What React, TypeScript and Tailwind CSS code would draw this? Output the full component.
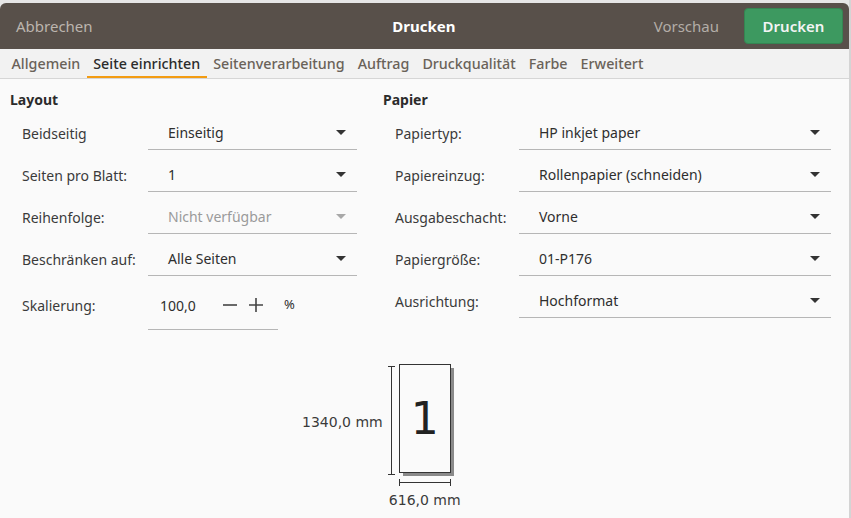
const tabs = [
  "Allgemein",
  "Seite einrichten",
  "Seitenverarbeitung",
  "Auftrag",
  "Druckqualität",
  "Farbe",
  "Erweitert",
];

function Arrow({ disabled }: { disabled?: boolean }) {
  return (
    <svg width="12" height="7" viewBox="0 0 12 7" className="shrink-0">
      <path d="M1 1 L11 1 L6 6 Z" fill={disabled ? "#a8a8a8" : "#333333"} />
    </svg>
  );
}

function Combo({
  label,
  value,
  labelW,
  boxW,
  disabled,
}: {
  label: string;
  value: string;
  labelW: string;
  boxW: string;
  disabled?: boolean;
}) {
  return (
    <div className="flex h-[34px]">
      <div className={`${labelW} flex items-center pt-[1px] text-[#3a3a3a]`}>{label}</div>
      <div
        className={`${boxW} flex items-center justify-between border-b border-[#b6b6b6] pl-5 pr-[10px]`}
      >
        <span className={disabled ? "text-[#9a9a9a]" : "text-[#2e2e2e]"}>{value}</span>
        <Arrow disabled={disabled} />
      </div>
    </div>
  );
}

export default function App() {
  return (
    <div
      className="w-[851px] h-[518px] overflow-hidden bg-[#e6e6e6] text-[14px] flex"
      style={{ fontFamily: '"Noto Sans", "Open Sans", sans-serif' }}
    >
      <div className="w-[849px] h-full flex flex-col pt-[3px]">
        {/* header */}
        <div className="h-[46px] bg-[#58504a] rounded-t-[6px] flex items-center pl-4 pr-[6px]">
          <span className="text-[15px] text-[#bcb5ae] w-[120px]">Abbrechen</span>
          <span className="flex-1 text-center text-[15px] font-bold text-white pl-[58px]">
            Drucken
          </span>
          <span className="text-[15px] text-[#b3ada7] mr-[25px]">Vorschau</span>
          <button className="h-[36px] w-[99px] rounded-[4px] bg-[#3d9960] border border-[#358552] text-[15px] font-semibold text-[#f4f4f4]">
            Drucken
          </button>
        </div>

        {/* tabs */}
        <div className="h-[30px] bg-[#f2f2f2] border-b border-[#d6d6d6] flex px-[5px] text-[14.3px]">
          {tabs.map((t) => (
            <div
              key={t}
              className={
                t === "Seite einrichten"
                  ? "px-[6.5px] flex items-center border-b-2 border-[#f39c12] text-[#2b2b2b] font-medium pt-[2px]"
                  : "px-[6.5px] flex items-center border-b-2 border-transparent text-[#6a6259] font-medium pt-[2px]"
              }
            >
              {t}
            </div>
          ))}
        </div>

        {/* content */}
        <div className="flex-1 bg-[#fafafa] flex flex-col">
          <div className="flex pl-[10px] pt-[10px]">
            <div className="w-[373px] flex flex-col">
              <div className="h-[22px] font-bold text-[#2b2b2b] leading-[22px]">Layout</div>
              <div className="flex flex-col gap-[8px] pl-3 mt-[5px]">
                <Combo label="Beidseitig" value="Einseitig" labelW="w-[126px]" boxW="w-[209px]" />
                <Combo label="Seiten pro Blatt:" value="1" labelW="w-[126px]" boxW="w-[209px]" />
                <Combo
                  label="Reihenfolge:"
                  value="Nicht verfügbar"
                  labelW="w-[126px]"
                  boxW="w-[209px]"
                  disabled
                />
                <Combo label="Beschränken auf:" value="Alle Seiten" labelW="w-[126px]" boxW="w-[209px]" />
                <div className="flex h-[46px]">
                  <div className="w-[126px] pt-[11px] text-[#3a3a3a]">Skalierung:</div>
                  <div className="w-[130px] border-b border-[#b6b6b6] flex items-start pt-[11px] pl-3 text-[#2e2e2e]">
                    <span className="w-[62px]">100,0</span>
                    <svg width="16" height="16" viewBox="0 0 16 16" className="mt-[2px]">
                      <path d="M1 8 H15" stroke="#444" strokeWidth="1.6" />
                    </svg>
                    <svg width="16" height="16" viewBox="0 0 16 16" className="mt-[2px] ml-[10px]">
                      <path d="M1 8 H15 M8 1 V15" stroke="#444" strokeWidth="1.6" />
                    </svg>
                  </div>
                  <div className="pt-[11px] pl-[6px] text-[13px] text-[#2e2e2e]">%</div>
                </div>
              </div>
            </div>
            <div className="w-[448px] flex flex-col">
              <div className="h-[22px] font-bold text-[#2b2b2b] leading-[22px]">Papier</div>
              <div className="flex flex-col gap-[8px] pl-3 mt-[5px]">
                <Combo label="Papiertyp:" value="HP inkjet paper" labelW="w-[124px]" boxW="w-[312px]" />
                <Combo
                  label="Papiereinzug:"
                  value="Rollenpapier (schneiden)"
                  labelW="w-[124px]"
                  boxW="w-[312px]"
                />
                <Combo label="Ausgabeschacht:" value="Vorne" labelW="w-[124px]" boxW="w-[312px]" />
                <Combo label="Papiergröße:" value="01-P176" labelW="w-[124px]" boxW="w-[312px]" />
                <Combo label="Ausrichtung:" value="Hochformat" labelW="w-[124px]" boxW="w-[312px]" />
              </div>
            </div>
          </div>

          {/* preview */}
          <div
            className="flex mt-[34px] pl-[302px] text-[14px] text-[#3a3a3a]"
            style={{ fontFamily: '"DejaVu Sans", sans-serif' }}
          >
            <div className="grid grid-cols-[auto_auto] grid-rows-[auto_auto]">
              <div className="flex items-center">
                <span className="mr-[5px] mt-[4px]">1340,0 mm</span>
                <div className="w-[7px] h-[109px] flex flex-col items-center mr-[4px]">
                  <div className="w-[7px] h-px bg-[#333]" />
                  <div className="w-px flex-1 bg-[#333]" />
                  <div className="w-[7px] h-px bg-[#333]" />
                </div>
              </div>
              <div className="relative w-[56px] h-[113px]">
                <div className="absolute left-[4px] top-[4px] w-[51px] h-[108px] bg-[#8a8a8a]" />
                <div className="absolute left-0 top-0 w-[52px] h-[109px] bg-[#fafafa] border border-[#333] flex items-center justify-center">
                  <span className="text-[44px] text-[#222] leading-none">1</span>
                </div>
              </div>
              <div />
              <div className="flex flex-col items-center w-[52px]">
                <div className="w-[52px] h-[7px] flex items-center mt-[2px]">
                  <div className="w-px h-[7px] bg-[#333]" />
                  <div className="flex-1 h-px bg-[#333]" />
                  <div className="w-px h-[7px] bg-[#333]" />
                </div>
                <span className="whitespace-nowrap mt-[4px]">616,0 mm</span>
              </div>
            </div>
          </div>
        </div>
      </div>
      <div className="flex-1 bg-[#d4d4d4]" />
    </div>
  );
}
